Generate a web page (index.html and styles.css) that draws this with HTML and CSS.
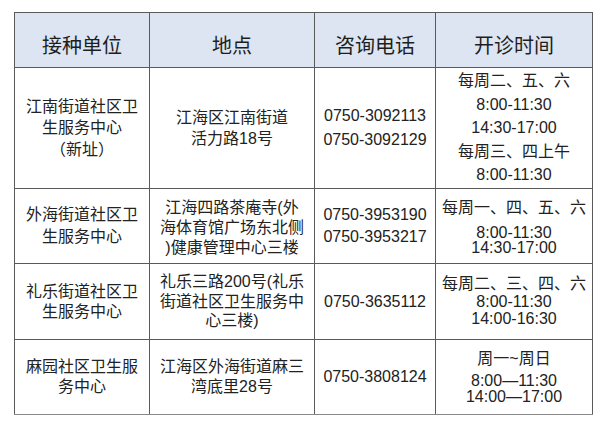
FILE: index.html
```html
<!DOCTYPE html>
<html lang="zh-CN">
<head>
<meta charset="utf-8">
<title>接种单位</title>
<link rel="stylesheet" href="styles.css">
</head>
<body>
<table class="sched">
  <colgroup>
    <col class="c-unit"><col class="c-addr"><col class="c-tel"><col class="c-time">
  </colgroup>
  <thead>
    <tr class="r-head">
      <th>接种单位</th>
      <th>地点</th>
      <th>咨询电话</th>
      <th>开诊时间</th>
    </tr>
  </thead>
  <tbody>
    <tr class="r1">
      <td class="r1c1"><div>江南街道社区卫</div><div>生服务中心</div><div>（新址）</div></td>
      <td class="r1c2"><div>江海区江南街道</div><div>活力路18号</div></td>
      <td class="r1c3"><div>0750-3092113</div><div>0750-3092129</div></td>
      <td class="r1c4"><div>每周二、五、六</div><div>8:00-11:30</div><div>14:30-17:00</div><div>每周三、四上午</div><div>8:00-11:30</div></td>
    </tr>
    <tr class="r2">
      <td class="r2c1"><div>外海街道社区卫</div><div>生服务中心</div></td>
      <td class="r2c2"><div class="pull">
        <div>江海四路茶庵寺(外</div><div>海体育馆广场东北侧</div><div>)健康管理中心三楼</div></div></td>
      <td class="r2c3"><div>0750-3953190</div><div>0750-3953217</div></td>
      <td class="r2c4"><div class="lead">每周一、四、五、六</div><div class="tight">8:00-11:30</div><div class="tight">14:30-17:00</div></td>
    </tr>
    <tr class="r3">
      <td class="r3c1"><div>礼乐街道社区卫</div><div>生服务中心</div></td>
      <td class="r3c2"><div>礼乐三路200号(礼乐</div><div>街道社区卫生服务中</div><div>心三楼)</div></td>
      <td class="r3c3"><div>0750-3635112</div></td>
      <td class="r3c4"><div>每周二、三、四、六</div><div>8:00-11:30</div><div>14:00-16:30</div></td>
    </tr>
    <tr class="r4">
      <td class="r4c1"><div>麻园社区卫生服</div><div>务中心</div></td>
      <td class="r4c2"><div>江海区外海街道麻三</div><div>湾底里28号</div></td>
      <td class="r4c3"><div>0750-3808124</div></td>
      <td class="r4c4"><div class="lead4">周一~周日</div><div class="t16">8:00—11:30</div><div class="t16">14:00—17:00</div></td>
    </tr>
  </tbody>
</table>
</body>
</html>
```

FILE: styles.css
```css
html, body {
  margin: 0;
  padding: 0;
  background: #ffffff;
}
body {
  padding: 12px 0 0 14px;
  font-family: "Liberation Sans", "Noto Sans CJK SC", sans-serif;
  color: #222;
}
.sched {
  border-collapse: collapse;
  table-layout: fixed;
  width: 578px;
  font-size: 16px;
}
.c-unit { width: 135px; }
.c-addr { width: 165px; }
.c-tel  { width: 121px; }
.c-time { width: 157px; }

.sched th, .sched td {
  border: 1px solid #5a5a5a;
  padding: 0;
  text-align: center;
  vertical-align: middle;
  white-space: nowrap;
  overflow: visible;
}
.sched tbody tr:last-child td { border-bottom-color: #8a8a8a; }

.r-head th {
  background: #dce5f1;
  font-weight: 400;
  font-size: 20px;
  line-height: 24px;
  color: #1e1e1e;
  height: 42px;
  padding-top: 12px;
}
.r1 { height: 121px; }
.r2 { height: 75px; }
.r3 { height: 76px; }
.r4 { height: 75px; }

/* row 1 */
.r1c1 { line-height: 21.5px; padding-bottom: 18px; }
.r1c2 { line-height: 21px; }
.r1c3 { line-height: 24px; padding-top: 5px; }
.r1c4 { line-height: 23.5px; padding-top: 5px; }

/* row 2 */
.r2c1 { line-height: 22px; padding-top: 1px; }
.r2c2 { line-height: 20px; vertical-align: bottom; }
.r2c2 .pull { margin-bottom: -3px; }
.r2c3 { line-height: 22px; padding-top: 3px; }
.r2c4 { padding-top: 2px; }
.r2c4 .lead { line-height: 20px; margin-bottom: 7px; }
.r2c4 .tight { line-height: 15px; }

/* row 3 */
.r3c1 { line-height: 20px; padding-top: 2px; }
.r3c2 { line-height: 19.5px; padding-top: 7px; }
.r3c3 { line-height: 20px; padding-top: 2px; }
.r3c4 { line-height: 17.5px; padding-top: 17px; }

/* row 4 */
.r4c1 { line-height: 20px; padding-top: 1px; }
.r4c2 { line-height: 20px; padding-top: 1px; }
.r4c3 { line-height: 20px; padding-top: 1px; }
.r4c4 { padding-top: 1px; }
.r4c4 .lead4 { line-height: 20px; margin-bottom: 4px; }
.r4c4 .t16 { line-height: 16px; }
```
